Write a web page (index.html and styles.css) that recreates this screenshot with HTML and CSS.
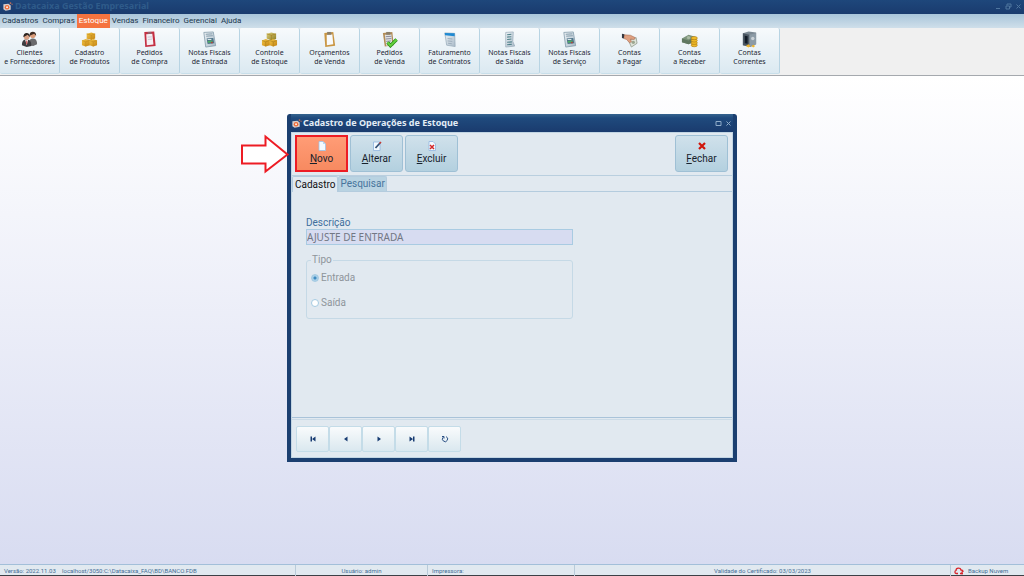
FILE: index.html
```html
<!DOCTYPE html>
<html lang="pt-BR">
<head>
<meta charset="utf-8">
<title>Datacaixa Gestão Empresarial</title>
<link rel="stylesheet" href="styles.css">
</head>
<body>
<svg class="defs" aria-hidden="true">
  <defs>
    <linearGradient id="gold" x1="0" y1="0" x2="1" y2="1"><stop offset="0" stop-color="#f2c544"/><stop offset="1" stop-color="#c48312"/></linearGradient>
    <linearGradient id="olive" x1="0" y1="0" x2="1" y2="1"><stop offset="0" stop-color="#ddd07a"/><stop offset="1" stop-color="#8d7d22"/></linearGradient>
    <linearGradient id="paper" x1="0" y1="0" x2="1" y2="1"><stop offset="0" stop-color="#eef3f6"/><stop offset="1" stop-color="#a9bac8"/></linearGradient>
    <symbol id="logo" viewBox="0 0 12 12"><path d="M1.500 3.500L7 3L9.500 5V9.500L4 10.500L1.500 9Z" fill="#d8cdcb"/><circle cx="5.500" cy="6.800" r="2.500" fill="#ef6a35"/><circle cx="5.500" cy="6.800" r="1" fill="#fff"/><path d="M8.500 1.500h1.500v1.500H8.500zM10.500 3h1v1h-1z" fill="#f0784a"/></symbol>
    <symbol id="people" viewBox="0 0 18 18"><path d="M8 15C8 10 10 8 13 8s4 3 4 6l-4 2Z" fill="#6a6a6c"/><circle cx="12.500" cy="4.500" r="3" fill="#d99b78"/><path d="M9 5c-.5-5.500 7.500-5.500 7 0l-2-2Z" fill="#3b2a22"/><path d="M1 15c0-4 1-6 5-6s5 3 5 7l-5 1Z" fill="#3c3c40"/><path d="M4.500 9.500l1.500 5.500 1.500-5.500Z" fill="#fff"/><path d="M5.600 10h1v4h-1z" fill="#c33"/><circle cx="6" cy="6" r="3" fill="#d9a184"/><path d="M2.500 6.500c-.5-6 7.500-6 7 0L7 4Z" fill="#2b2422"/></symbol>
    <symbol id="boxes" viewBox="0 0 18 18"><path d="M6 3l5-1.500 4 1.500v5l-4 1.500L6 8Z" fill="url(#gold)"/><path d="M1 10l4-1.500L9.500 10v5L5 16.500 1 15Z" fill="url(#gold)"/><path d="M9 10l4-1.500 4 1.500v5l-4 1.500L9 15Z" fill="url(#gold)"/><path d="M6 8l3 2M6 3l5 1.500V9.500M11 4.500L15 3M1 10l4 1.500V16.500M5 11.500L9 10M9 10l4 1.500v5M13 11.500l4-1.500" fill="none" stroke="#c28b1e" stroke-width=".6"/></symbol>
    <symbol id="stock" viewBox="0 0 18 18"><path d="M6 3l5-1.500 5 1.500v5.500l-5 1.500L6 8Z" fill="url(#olive)"/><path d="M1 10l4-1.500L9.500 10v5L5 16.500 1 15Z" fill="url(#gold)"/><path d="M9 10l4-1.500 4 1.500v5l-4 1.500L9 15Z" fill="url(#gold)"/><path d="M6 3l5 1.500V9.500M11 4.500L16 3M1 10l4 1.500V16.500M5 11.500L9 10M9 10l4 1.500v5M13 11.500l4-1.500" fill="none" stroke="#a57a1a" stroke-width=".6"/></symbol>
    <symbol id="clip-red" viewBox="0 0 18 18"><path d="M3.500 1L14 .5l1.500 15.500L4.500 17Z" fill="#c42f42"/><path d="M5.500 3.500l6.500-.5 1.200 11.200-7 1Z" fill="#f4eef2"/><path d="M7 1h4v2H7z" fill="#8d6470"/><path d="M7 6.500l4.500-.3M7.300 9l4.500-.5" stroke="#c7c7d6"/></symbol>
    <symbol id="clip-gold" viewBox="0 0 18 18"><path d="M3.500 2L13 1l2 14.500L4.500 17Z" fill="#c99643"/><path d="M6 4l6-.5 1 10.500-6.800 1Z" fill="#f8fafc"/><path d="M6.500 1H11v3H6.500z" fill="#8b7f6a"/></symbol>
    <symbol id="clip-check" viewBox="0 0 18 18"><path d="M2 2l10-1 1.500 14L4 16.500Z" fill="#b28c56"/><path d="M4 4l7-.5 1 11-6.500 1Z" fill="#e0e2e2"/><path d="M5.500 1H10v3H5.500z" fill="#8b7f6a"/><path d="M5 6l6-.4M5 8.500l6-.5M5.500 11l5-.5" stroke="#889"/><path d="M7 12l3 3.500L16.500 9" fill="none" stroke="#278b18" stroke-width="3.600"/><path d="M7 12l3 3.500L16.500 9" fill="none" stroke="#63d33e" stroke-width="2"/></symbol>
    <symbol id="nota" viewBox="0 0 18 18"><path d="M3 1.500L13 1l2.500 14.500L5 17Z" fill="url(#paper)" stroke="#7e97a7" stroke-width=".8"/><path d="M5 3.500l7-.5M5.500 5.500l7-.5" stroke="#8299a8"/><path d="M6 8l7-.6 1 5.600-7 .8Z" fill="#4d7388"/><path d="M7 10.500l5-.5v2l-4.500.5Z" fill="#4fae68"/><path d="M7 8.500h4v1H7z" fill="#e3edf0"/><path d="M10.500 11.500h2V13h-2z" fill="#b0483c"/></symbol>
    <symbol id="contract" viewBox="0 0 18 18"><path d="M4 2l10.500.5L15 16.500 6 15Z" fill="url(#paper)" stroke="#91a5b5" stroke-width=".7"/><path d="M4 2l10.500.5V5.500L4.300 4.500Z" fill="#208ad2"/><path d="M7 8l5 .5M7 10.500l5 .5M7.500 13l4 .5" stroke="#9aabba"/></symbol>
    <symbol id="saida" viewBox="0 0 18 18"><path d="M5 1.500l8-.5-.5 10 2 5-9.500 1Z" fill="url(#paper)" stroke="#91a5b5" stroke-width=".7"/><path d="M6.500 4l4.500-.5M6.500 6.500l4.500-.5M6.500 9l4.500-.5M6.500 12l5-.5M6.500 14.500l5-.5" stroke="#4c7f88" stroke-width="1.100"/></symbol>
    <symbol id="hand" viewBox="0 0 18 18"><path d="M8 10l8-3 1 6-6 4Z" fill="#dfe4da" stroke="#8b9586" stroke-width=".8"/><circle cx="13" cy="12" r="1.800" fill="#9ba68f"/><path d="M3 4l7 .5 5 2.500-1 2-4-.5 1 3-2 1-3-3.500-3-1Z" fill="#dfa080" stroke="#a86a50" stroke-width=".6"/><path d="M1 3l2.500.5-.5 4.500L1 7.500Z" fill="#353840"/></symbol>
    <symbol id="money" viewBox="0 0 18 18"><path d="M1 8l7-4 7 2v5l-7 3-7-2Z" fill="#7d947c"/><path d="M1 8l7 2 7-4v5l-7 3-7-2Z" fill="#5f7760"/><circle cx="8" cy="7" r="1.800" fill="#a9baa2"/><g fill="#efbb28" stroke="#a97510" stroke-width=".6"><ellipse cx="14" cy="15" rx="3.300" ry="1.700"/><ellipse cx="14" cy="12.500" rx="3.300" ry="1.700"/><ellipse cx="14" cy="10" rx="3.300" ry="1.700"/><ellipse cx="14" cy="7.500" rx="3.300" ry="1.700"/></g></symbol>
    <symbol id="safe" viewBox="0 0 18 18"><path d="M2 2.500l6-2 8 1v12.500l-6 3-8-2Z" fill="#7b8892"/><path d="M2 2.500l7 1.500v12.500l-7-1.500Z" fill="#4a5661"/><path d="M9 4l7-2v12l-7 2.500Z" fill="#8c9ba6"/><circle cx="12.500" cy="8" r="1.800" fill="#c9d1d6"/><path d="M4 5l3 .5v8L4 13Z" fill="#111b26"/><path d="M5 16l3-2 2 2-2 1.500Zm6 0l2-1.500 2 1.500-2 1.500Z" fill="#efb52c"/></symbol>
  </defs>
</svg>

<div class="app">
  <header class="titlebar">
    <svg class="logo"><use href="#logo"/></svg>
    <h1>Datacaixa Gestão Empresarial</h1>
    <div class="winbtns">
      <button aria-label="Minimizar"><svg viewBox="0 0 7 7"><path d="M1 5.500h4"/></svg></button>
      <button aria-label="Restaurar"><svg viewBox="0 0 7 7"><path d="M2 2.500V1h4v3H4.500M1 3h3.500v3H1z"/></svg></button>
      <button aria-label="Fechar janela"><svg viewBox="0 0 7 7"><path d="M1.500 1.500l4 4m0-4l-4 4"/></svg></button>
    </div>
  </header>
  <nav class="menu">
    <a href="#">Cadastros</a><a href="#">Compras</a><a href="#" class="current">Estoque</a><a href="#">Vendas</a><a href="#">Financeiro</a><a href="#">Gerencial</a><a href="#">Ajuda</a>
  </nav>
  <div class="toolbar">
    <button><svg><use href="#people"/></svg>Clientes<br>e Fornecedores</button>
    <button><svg><use href="#boxes"/></svg>Cadastro<br>de Produtos</button>
    <button><svg><use href="#clip-red"/></svg>Pedidos<br>de Compra</button>
    <button><svg><use href="#nota"/></svg>Notas Fiscais<br>de Entrada</button>
    <button><svg><use href="#stock"/></svg>Controle<br>de Estoque</button>
    <button><svg><use href="#clip-gold"/></svg>Orçamentos<br>de Venda</button>
    <button><svg><use href="#clip-check"/></svg>Pedidos<br>de Venda</button>
    <button><svg><use href="#contract"/></svg>Faturamento<br>de Contratos</button>
    <button><svg><use href="#saida"/></svg>Notas Fiscais<br>de Saída</button>
    <button><svg><use href="#nota"/></svg>Notas Fiscais<br>de Serviço</button>
    <button><svg><use href="#hand"/></svg>Contas<br>a Pagar</button>
    <button><svg><use href="#money"/></svg>Contas<br>a Receber</button>
    <button><svg><use href="#safe"/></svg>Contas<br>Correntes</button>
  </div>
  <main class="desktop">
    <section class="dialog" aria-labelledby="dlg-title">
      <svg class="arrow" viewBox="0 0 50 40" aria-hidden="true"><path d="M2 11.500H25.500V2.500L47.500 20.500L25.500 37.500V29.500H2Z" fill="#fff" stroke="#ed1c24" stroke-width="2"/></svg>
      <header class="dialog-title">
        <svg class="logo"><use href="#logo"/></svg>
        <h2 id="dlg-title">Cadastro de Operações de Estoque</h2>
        <div class="winbtns">
          <button aria-label="Maximizar"><svg viewBox="0 0 7 7"><path d="M1 1.500h5v4H1z"/></svg></button>
          <button aria-label="Fechar"><svg viewBox="0 0 7 7"><path d="M1.500 1.500l4 4m0-4l-4 4"/></svg></button>
        </div>
      </header>
      <div class="dialog-body">
        <div class="actions">
          <button class="action new"><svg viewBox="0 0 10 10"><path d="M2 .5h4l2.500 2.500v6.500H2z" fill="#f4faff" stroke="#9cc3e8" stroke-width=".8"/><path d="M6 .5V3h2.500" fill="#b5d8f4"/></svg><span><u>N</u>ovo</span></button>
          <button class="action"><svg viewBox="0 0 10 10"><path d="M1.500 1h6.500v8.500H1.500z" fill="#f4faff" stroke="#8fb5df" stroke-width=".8"/><path d="M3.500 7L8 2" stroke="#345277" stroke-width="1.800"/><path d="M7.500 2.500L9 1" stroke="#c63b35" stroke-width="1.600"/></svg><span><u>A</u>lterar</span></button>
          <button class="action"><svg viewBox="0 0 10 10"><path d="M2 .5h4l2.500 2.500v6.500H2z" fill="#f4faff" stroke="#8fb5df" stroke-width=".8"/><path d="M3 4l4 4m0-4l-4 4" stroke="#d42727" stroke-width="1.500"/></svg><span><u>E</u>xcluir</span></button>
          <button class="action close"><svg viewBox="0 0 10 10"><path d="M2 2l6 6m0-6l-6 6" stroke="#d0160b" stroke-width="2.200"/></svg><span><u>F</u>echar</span></button>
        </div>
        <div class="tabs" role="tablist">
          <button class="tab active" role="tab" aria-selected="true">Cadastro</button>
          <button class="tab" role="tab" aria-selected="false">Pesquisar</button>
        </div>
        <form class="page">
          <label for="descricao">Descrição</label>
          <input id="descricao" type="text" value="AJUSTE DE ENTRADA" disabled>
          <fieldset disabled>
            <legend>Tipo</legend>
            <label><input type="radio" name="tipo" checked>Entrada</label>
            <label><input type="radio" name="tipo">Saída</label>
          </fieldset>
        </form>
        <footer class="pager">
          <button aria-label="Primeiro"><svg viewBox="0 0 8 8"><path d="M1.500 1.500h1.500v5H1.500zM6.500 1.500v5L3 4z"/></svg></button>
          <button aria-label="Anterior"><svg viewBox="0 0 8 8"><path d="M5.500 1.500v5L2 4z"/></svg></button>
          <button aria-label="Próximo"><svg viewBox="0 0 8 8"><path d="M2.500 1.500v5L6 4z"/></svg></button>
          <button aria-label="Último"><svg viewBox="0 0 8 8"><path d="M5 1.500h1.500v5H5zM1.500 1.500v5L5 4z"/></svg></button>
          <button aria-label="Atualizar"><svg viewBox="0 0 8 8"><path d="M5 1.600A2.600 2.600 0 1 1 2.200 2.200M1 1.500h2v2" fill="none" stroke="#294f84"/></svg></button>
        </footer>
      </div>
    </section>
  </main>
  <footer class="status">
    <span class="version">Versão: 2022.11.03</span>
    <span class="db">localhost/3050:C:\Datacaixa_FAQ\BD\BANCO.FDB</span>
    <span class="user">Usuário: admin</span>
    <span class="printer">Impressora:</span>
    <span class="cert">Validade do Certificado: 03/03/2023</span>
    <span class="backup"><svg viewBox="0 0 10 8"><path d="M4 6.500H2.500C.5 6.500.5 4 2 3.500 2 .5 6.500.5 7 3c2 0 2 1.500 2 2M6 6.500h3M8 4.500v3" fill="none" stroke="#d8262c" stroke-width="1.300"/></svg>Backup Nuvem</span>
  </footer>
</div>
</body>
</html>
```

FILE: styles.css
```css
* { box-sizing: border-box; }
body { margin: 0; font: 8px/9px Roboto, "Noto Sans", sans-serif; color: #1c2733; }
button, input { font: inherit; color: inherit; margin: 0; padding: 0; }
h1, h2 { margin: 0; }
svg { display: block; }
.defs { position: absolute; width: 0; height: 0; }

.app { min-height: 100vh; display: flex; flex-direction: column; }

.titlebar { display: flex; align-items: center; gap: 2px; height: 14px; padding: 0 2px 2px; background: linear-gradient(#1e477b, #1a3b6e); }
.titlebar h1, .dialog-title h2 { font: bold 9px/12px "Noto Sans", "DejaVu Sans", sans-serif; }
.titlebar h1 { color: #2f5b8a; }
.logo { width: 11px; height: 11px; }
.winbtns { display: flex; gap: 3px; margin-left: auto; color: #4f769f; }
.winbtns button { border: 0; background: none; }
.winbtns svg { width: 7px; height: 7px; fill: none; stroke: currentColor; }

.menu { display: flex; height: 14px; background: linear-gradient(#a9c5da, #cfdfea); }
.menu a { padding: 1px 2px 0; line-height: 12px; color: #20364c; text-decoration: none; }
.menu .current { background: #f5733f; color: #fff; }

.toolbar { display: flex; height: 48px; background: #f0f0f0; border-bottom: 1px solid #a5a9ae; }
.toolbar button { width: 60px; height: 46px; padding: 3px 0 7px; border: 0; border-right: 1px solid #b8d4e3; border-bottom: 1px solid #c8dfea; border-radius: 2px; background: linear-gradient(#f7fafc, #dbe9f1); display: block; text-align: center; white-space: nowrap; font: 7px/9px "Noto Sans", sans-serif; }
.toolbar svg { width: 17px; height: 17px; margin: 0 auto; }

.desktop { flex: 1; display: grid; place-items: center; padding-bottom: 64px; background: linear-gradient(#fff, #d8dcf1); }
.dialog { position: relative; width: 450px; border: solid #1b3f70; border-width: 0 4px 4px; border-radius: 3px 3px 0 0; background: #1b3f70; }
.arrow { position: absolute; left: -51px; top: 20px; width: 50px; height: 40px; }
.dialog-title { display: flex; align-items: center; gap: 1px; height: 18px; background: linear-gradient(#35648f, #1f4a7d 4px, #1a3b6e); color: #fff; }
.dialog-title h2 { color: #e3edf6; }
.dialog-title .winbtns { color: #8fabc8; padding-right: 1px; }
.dialog-body { background: #e1e9f0; border: 1px solid #c2d5e3; }

.actions { display: flex; gap: 2px; padding: 2px 4px 3px 3px; border-bottom: 1px solid #b9cfdf; }
.action { width: 53px; height: 37px; border: 1px solid #9fc0d5; border-radius: 3px; background: linear-gradient(#d0e1eb, #b3d0df); font-size: 10px; line-height: 14px; color: #17212b; }
.action svg { width: 10px; height: 10px; margin: 0 auto 1px; }
.action span { display: block; }
.action.new { background: linear-gradient(#ff9c76, #f78a60); border: 2px solid #ed1c24; border-radius: 0; }
.action.close { margin-left: auto; }

.tabs { display: flex; align-items: flex-end; height: 16px; border-bottom: 1px solid #b4ccde; }
.tab { height: 15px; padding: 0 1px; border: 1px solid #b4ccde; border-bottom: 0; border-radius: 2px 2px 0 0; background: #b9d3e2; font-size: 10px; line-height: 14px; color: #47749c; }
.tab.active { height: 16px; margin-bottom: -1px; padding: 0 2px; background: #e1e9f0; color: #111; }

.page { height: 226px; padding: 25px 14px 0; font-size: 10px; line-height: 12px; color: #3f6f9d; border-bottom: 1px solid #a9c3d9; }
.page > label { display: block; }
.page > input { display: block; width: 267px; height: 16px; padding: 0; border: 1px solid #a9cbe2; background: #d7dcf1; color: #727784; font-family: "Noto Sans", sans-serif; }
.page fieldset { width: 267px; margin: 9px 0 0; padding: 6px 4px 9px; border: 1px solid #c5d9e6; border-radius: 3px; color: #8e959b; display: grid; gap: 13px; }
.page legend { padding: 0 1px; }
.page fieldset label { display: flex; align-items: center; gap: 2px; }
.page input[type=radio] { appearance: none; width: 8px; height: 8px; border: 1px solid #a5cbe2; border-radius: 50%; background: #fff; }
.page input[type=radio]:checked { background: radial-gradient(#3f8bc0 0 1px, #a9d0e9 2px); }

.pager { display: flex; margin-top: 1px; padding: 6px 4px 5px; border-top: 1px solid #cbdbe7; }
.pager button { width: 33px; height: 26px; border: 1px solid #c4dce8; border-radius: 2px; background: linear-gradient(#f9fbfc, #dae8ef); }
.pager svg { width: 8px; height: 8px; margin: 0 auto; fill: #183c72; }

.status { display: grid; grid-template-columns: 62fr 234fr 132fr 147fr 376fr 73fr; height: 12px; border-top: 1px solid #a3bfd9; border-bottom: 1px solid #3c4046; background: #e1e9f0; font-size: 6px; line-height: 11px; color: #446d95; white-space: nowrap; }
.status span { border-right: 1px solid #b9cbd9; padding-left: 4px; }
.status .version { border-right: 0; }
.status .db { padding-left: 0; }
.status .user, .status .cert { text-align: center; padding: 0; }
.status .backup { display: flex; align-items: center; gap: 4px; padding-left: 3px; border: 0; }
.status svg { width: 10px; height: 8px; }
```
